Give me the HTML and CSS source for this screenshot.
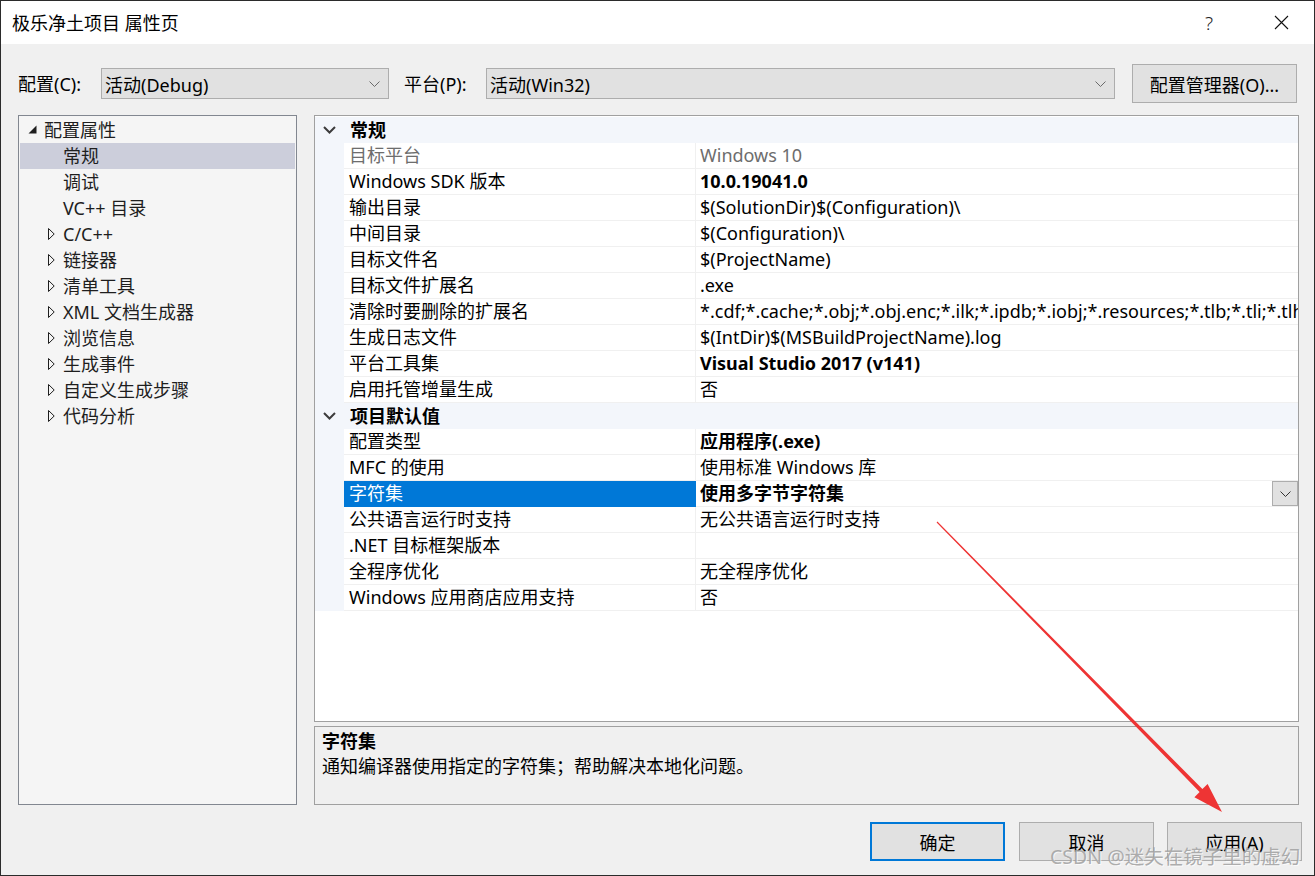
FILE: index.html
```html
<!DOCTYPE html>
<html lang="zh-CN">
<head>
<meta charset="utf-8">
<title>极乐净土项目 属性页</title>
<link rel="stylesheet" href="styles.css">
</head>
<body>
<div class="window">
  <div class="titlebar">
    <div class="title">极乐净土项目 属性页</div>
    <div class="tb-help">?</div>
    <div class="tb-close"><svg width="15" height="15" viewBox="0 0 15 15"><path d="M1 1 L14 14 M14 1 L1 14" stroke="#111" stroke-width="1.1" fill="none"/></svg></div>
  </div>

  <div class="toolbar">
    <span class="lbl lbl-config">配置(C):</span>
    <div class="combo combo-config"><span class="ctext">活动(Debug)</span><svg class="cchev" width="11" height="6" viewBox="0 0 11 6"><path d="M0.5 0.5 L5.5 5.5 L10.5 0.5" stroke="#6a6a6a" stroke-width="1" fill="none"/></svg></div>
    <span class="lbl lbl-platform">平台(P):</span>
    <div class="combo combo-platform"><span class="ctext">活动(Win32)</span><svg class="cchev" width="11" height="6" viewBox="0 0 11 6"><path d="M0.5 0.5 L5.5 5.5 L10.5 0.5" stroke="#6a6a6a" stroke-width="1" fill="none"/></svg></div>
    <button class="btn btn-mgr">配置管理器(O)...</button>
  </div>

  <div class="main">
    <div class="tree">
      <div class="tnode root"><span class="exp"><svg width="9" height="9" viewBox="0 0 9 9"><polygon points="8.5,0.5 8.5,8.5 0.5,8.5" fill="#1e1e1e"/></svg></span><span>配置属性</span></div>
      <div class="tnode child sel"><span class="exp"></span><span>常规</span></div>
      <div class="tnode child"><span class="exp"></span><span>调试</span></div>
      <div class="tnode child"><span class="exp"></span><span>VC++ 目录</span></div>
      <div class="tnode child"><span class="exp"><svg class="tri" width="7" height="12" viewBox="0 0 7 12"><polygon points="0.5,0.5 6.2,6 0.5,11.5" fill="none" stroke="#1e1e1e" stroke-width="1"/></svg></span><span>C/C++</span></div>
      <div class="tnode child"><span class="exp"><svg class="tri" width="7" height="12" viewBox="0 0 7 12"><polygon points="0.5,0.5 6.2,6 0.5,11.5" fill="none" stroke="#1e1e1e" stroke-width="1"/></svg></span><span>链接器</span></div>
      <div class="tnode child"><span class="exp"><svg class="tri" width="7" height="12" viewBox="0 0 7 12"><polygon points="0.5,0.5 6.2,6 0.5,11.5" fill="none" stroke="#1e1e1e" stroke-width="1"/></svg></span><span>清单工具</span></div>
      <div class="tnode child"><span class="exp"><svg class="tri" width="7" height="12" viewBox="0 0 7 12"><polygon points="0.5,0.5 6.2,6 0.5,11.5" fill="none" stroke="#1e1e1e" stroke-width="1"/></svg></span><span>XML 文档生成器</span></div>
      <div class="tnode child"><span class="exp"><svg class="tri" width="7" height="12" viewBox="0 0 7 12"><polygon points="0.5,0.5 6.2,6 0.5,11.5" fill="none" stroke="#1e1e1e" stroke-width="1"/></svg></span><span>浏览信息</span></div>
      <div class="tnode child"><span class="exp"><svg class="tri" width="7" height="12" viewBox="0 0 7 12"><polygon points="0.5,0.5 6.2,6 0.5,11.5" fill="none" stroke="#1e1e1e" stroke-width="1"/></svg></span><span>生成事件</span></div>
      <div class="tnode child"><span class="exp"><svg class="tri" width="7" height="12" viewBox="0 0 7 12"><polygon points="0.5,0.5 6.2,6 0.5,11.5" fill="none" stroke="#1e1e1e" stroke-width="1"/></svg></span><span>自定义生成步骤</span></div>
      <div class="tnode child"><span class="exp"><svg class="tri" width="7" height="12" viewBox="0 0 7 12"><polygon points="0.5,0.5 6.2,6 0.5,11.5" fill="none" stroke="#1e1e1e" stroke-width="1"/></svg></span><span>代码分析</span></div>
    </div>

    <div class="rightcol">
      <div class="grid">
        <div class="prow cat"><div class="gut"><svg width="13" height="8" viewBox="0 0 13 8"><path d="M1 1 L6.5 6.5 L12 1" stroke="#3c3c3c" stroke-width="2" fill="none"/></svg></div><div class="ctitle">常规</div></div>
        <div class="prow"><div class="gut"></div><div class="pname dim">目标平台</div><div class="pval dim">Windows 10</div></div>
        <div class="prow"><div class="gut"></div><div class="pname">Windows SDK 版本</div><div class="pval b">10.0.19041.0</div></div>
        <div class="prow"><div class="gut"></div><div class="pname">输出目录</div><div class="pval">$(SolutionDir)$(Configuration)\</div></div>
        <div class="prow"><div class="gut"></div><div class="pname">中间目录</div><div class="pval">$(Configuration)\</div></div>
        <div class="prow"><div class="gut"></div><div class="pname">目标文件名</div><div class="pval">$(ProjectName)</div></div>
        <div class="prow"><div class="gut"></div><div class="pname">目标文件扩展名</div><div class="pval">.exe</div></div>
        <div class="prow"><div class="gut"></div><div class="pname">清除时要删除的扩展名</div><div class="pval">*.cdf;*.cache;*.obj;*.obj.enc;*.ilk;*.ipdb;*.iobj;*.resources;*.tlb;*.tli;*.tlh;*.tmp;*.rsp;*.pgc;*.pgd;*.meta;*.tlog;*.manifest;*.res;*.pch;*.exp;*.idb;*.rep;*.xdc;*.pdb;*_manifest.rc;*.bsc;*.sbr;*.xml;*.metagen;*.bi</div></div>
        <div class="prow"><div class="gut"></div><div class="pname">生成日志文件</div><div class="pval">$(IntDir)$(MSBuildProjectName).log</div></div>
        <div class="prow"><div class="gut"></div><div class="pname">平台工具集</div><div class="pval b">Visual Studio 2017 (v141)</div></div>
        <div class="prow"><div class="gut"></div><div class="pname">启用托管增量生成</div><div class="pval">否</div></div>
        <div class="prow cat"><div class="gut"><svg width="13" height="8" viewBox="0 0 13 8"><path d="M1 1 L6.5 6.5 L12 1" stroke="#3c3c3c" stroke-width="2" fill="none"/></svg></div><div class="ctitle">项目默认值</div></div>
        <div class="prow"><div class="gut"></div><div class="pname">配置类型</div><div class="pval b">应用程序(.exe)</div></div>
        <div class="prow"><div class="gut"></div><div class="pname">MFC 的使用</div><div class="pval">使用标准 Windows 库</div></div>
        <div class="prow"><div class="gut"></div><div class="pname sel">字符集</div><div class="pval b"><span class="vtext">使用多字节字符集</span><span class="ddbtn"><svg width="11" height="6" viewBox="0 0 11 6"><path d="M0.5 0.5 L5.5 5.5 L10.5 0.5" stroke="#333" stroke-width="1" fill="none"/></svg></span></div></div>
        <div class="prow"><div class="gut"></div><div class="pname">公共语言运行时支持</div><div class="pval">无公共语言运行时支持</div></div>
        <div class="prow"><div class="gut"></div><div class="pname">.NET 目标框架版本</div><div class="pval"></div></div>
        <div class="prow"><div class="gut"></div><div class="pname">全程序优化</div><div class="pval">无全程序优化</div></div>
        <div class="prow"><div class="gut"></div><div class="pname">Windows 应用商店应用支持</div><div class="pval">否</div></div>
      </div>
      <div class="desc">
        <div class="dtitle">字符集</div>
        <div class="dtext">通知编译器使用指定的字符集；帮助解决本地化问题。</div>
      </div>
    </div>
  </div>

  <div class="buttons">
    <button class="btn dbtn ok">确定</button>
    <button class="btn dbtn cancel">取消</button>
    <button class="btn dbtn apply">应用(A)</button>
  </div>

  <svg class="arrow" width="1315" height="876" viewBox="0 0 1315 876">
    <polygon points="936.6,522.4 1199.6,791.9 1194.4,797.2 1222,812 1207.6,784.1 1202.4,789.1 937.4,521.6" fill="#ee3434"/>
  </svg>
  <div class="watermark">CSDN @迷失在镜子里的虚幻</div>
</div>
</body>
</html>
```

FILE: styles.css
```css
* { box-sizing: border-box; }
html, body { margin: 0; padding: 0; }
body {
  width: 1315px;
  height: 876px;
  overflow: hidden;
  font-family: "Noto Sans", "Noto Sans CJK SC", sans-serif;
  font-size: 18px;
  color: #000;
  background: #f0f0f0;
}
.window {
  position: relative;
  width: 1315px;
  height: 876px;
  border: 1px solid #2b2b2b;
  background: #f0f0f0;
  display: flex;
  flex-direction: column;
}
.titlebar {
  flex: none;
  height: 43px;
  background: #fff;
  display: flex;
  align-items: center;
  padding-left: 11px;
}
.title { flex: 1; font-size: 18px; line-height: 24px; }
.tb-help, .tb-close {
  width: 46px;
  height: 43px;
  display: flex;
  align-items: center;
  justify-content: center;
}
.tb-help { font-size: 19px; font-weight: 300; color: #222; }
.tb-close { margin-left: 26px; margin-right: 10px; }

.toolbar {
  flex: none;
  display: flex;
  align-items: center;
  height: 39px;
  margin-top: 20px;
  padding-left: 17px;
}
.lbl { line-height: 24px; white-space: nowrap; }
.lbl-config { width: 83px; }
.lbl-platform { width: 82px; margin-left: 15px; }
.combo {
  height: 31px;
  background: #e1e1e1;
  border: 1px solid #adadad;
  display: flex;
  align-items: center;
  padding-left: 3px;
  padding-right: 8px;
}
.ctext { flex: 1; white-space: nowrap; }
.combo-config { width: 288px; }
.combo-platform { width: 629px; }
.btn {
  font-family: inherit;
  font-size: 18px;
  color: #000;
  background: #e1e1e1;
  border: 1px solid #adadad;
  padding: 0;
  margin: 0;
}
.btn-mgr { width: 165px; height: 39px; margin-left: 17px; }

.main {
  flex: none;
  display: flex;
  height: 690px;
  margin-top: 12px;
  padding-left: 17px;
}
.tree {
  width: 279px;
  background: #f5f5f5;
  border: 1px solid #828790;
  padding-top: 1px;
  color: #1e1e1e;
}
.tnode {
  height: 26px;
  display: flex;
  align-items: center;
  line-height: 26px;
  white-space: nowrap;
}
.tnode.root { padding-left: 9px; }
.tnode.child { padding-left: 29px; }
.exp { display: flex; align-items: center; flex: none; }
.root .exp { width: 16px; padding-bottom: 2px; }
.child .exp { width: 15px; }
.tnode.sel { background: #cccedb; margin: 0 1px; padding-left: 28px; }

.rightcol {
  width: 985px;
  margin-left: 17px;
  display: flex;
  flex-direction: column;
}
.grid {
  height: 607px;
  background: #fff;
  border: 1px solid #a0a0a0;
  padding-top: 1px;
  overflow: hidden;
}
.prow { display: flex; height: 26px; }
.gut {
  width: 29px;
  flex: none;
  background: #f3f6fb;
  display: flex;
  align-items: center;
  justify-content: center;
}
.cat { background: #f3f6fb; }
.ctitle { padding-left: 6px; font-weight: bold; line-height: 26px; white-space: nowrap; }
.pname {
  width: 352px;
  flex: none;
  padding-left: 5px;
  border-bottom: 1px solid #f0f0f0;
  border-right: 1px solid #f0f0f0;
  line-height: 25px;
  white-space: nowrap;
  overflow: hidden;
}
.pval {
  flex: 1;
  min-width: 0;
  padding-left: 4px;
  border-bottom: 1px solid #f0f0f0;
  line-height: 25px;
  white-space: nowrap;
  overflow: hidden;
  display: flex;
}
.dim { color: #6d6d6d; }
.b { font-weight: bold; }
.pname.sel { background: #0078d7; color: #fff; border-color: #0078d7; }
.vtext { flex: 1; }
.ddbtn {
  flex: none;
  width: 26px;
  height: 25px;
  background: #e1e1e1;
  border: 1px solid #adadad;
  display: flex;
  align-items: center;
  justify-content: center;
}

.desc {
  height: 79px;
  margin-top: 4px;
  border: 1px solid #a0a0a0;
  padding: 2px 7px 0;
  line-height: 25px;
}
.dtitle { font-weight: bold; }

.buttons {
  flex: none;
  display: flex;
  justify-content: flex-end;
  margin-top: 17px;
  padding-right: 12px;
}
.dbtn { width: 135px; height: 39px; }
.ok { border: 2px solid #0078d7; }
.cancel { margin-left: 14px; }
.apply { margin-left: 13px; }

.arrow {
  position: absolute;
  left: -1px;
  top: -1px;
  pointer-events: none;
}
.watermark {
  position: absolute;
  left: 1049px;
  top: 845px;
  font-size: 19.5px;
  line-height: 22px;
  color: rgba(160, 160, 160, 0.85);
  text-shadow: 1px 1px 0 rgba(255, 255, 255, 0.7);
  white-space: nowrap;
  pointer-events: none;
}
```
